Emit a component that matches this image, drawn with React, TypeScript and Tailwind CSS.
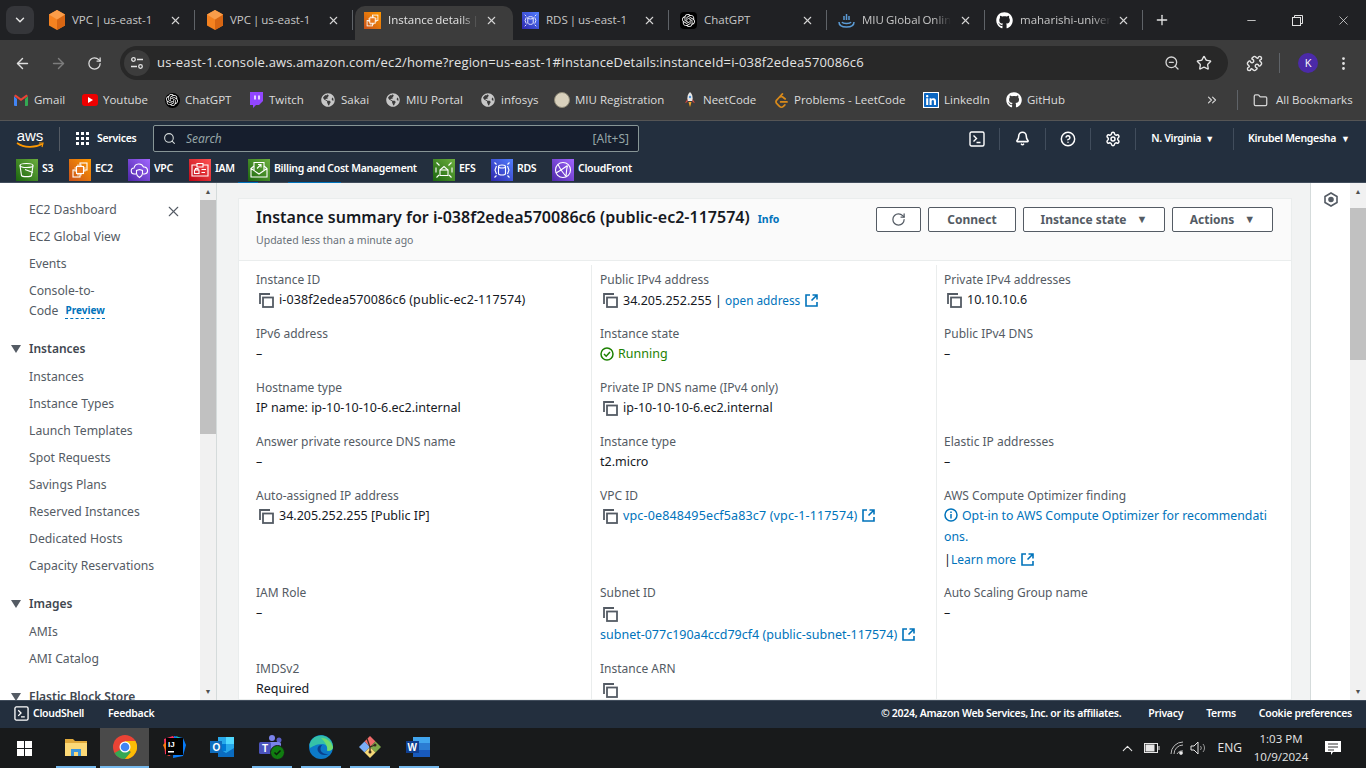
import { ArrowLeft, ArrowRight, RotateCw, Search, ZoomOut, Star, Puzzle, EllipsisVertical, ChevronDown, X, Plus, Minus, Folder, ChevronsRight, Bell, CircleHelp, Settings, ChevronUp } from 'lucide-react';
import { FaGithub, FaLinkedin, FaGlobeAmericas } from 'react-icons/fa';
import { SiOpenai, SiLeetcode } from 'react-icons/si';

const chromeFont = "font-['Open_Sans','Noto_Sans',sans-serif]";

function OrangeCube() {
  return (
    <svg width="16" height="20" viewBox="0 0 16 20">
      <path d="M8 0l8 4.500v11L8 20 0 15.500v-11z" fill="#f58220" />
      <path d="M8 9.500V20l8-4.500v-11z" fill="#d86613" />
      <path d="M8 0l8 4.500-8 5-8-5z" fill="#fa9d4a" />
    </svg>
  );
}

// service glyphs, drawn on a 22 box
const stroke = { fill: 'none', stroke: '#fff', strokeWidth: 1.1 };

function Ec2Glyph({ size = 22 }: { size?: number }) {
  return (
    <svg width={size} height={size} viewBox="0 0 22 22" {...stroke}>
      <rect x="11" y="4" width="7" height="7" />
      <rect x="4" y="11" width="7" height="7" />
      <rect x="7.500" y="7.500" width="7" height="7" fill="#e8761a" />
      <path d="M9 5.500v2M12 5.500v2M9 14.500v2M12 14.500v2M5.500 9h2M5.500 12h2M14.500 9h2M14.500 12h2" />
    </svg>
  );
}

function RdsGlyph({ size = 22 }: { size?: number }) {
  return (
    <svg width={size} height={size} viewBox="0 0 22 22" {...stroke}>
      <ellipse cx="11" cy="7.500" rx="3.500" ry="1.500" />
      <path d="M7.500 7.500v7c0 2 7 2 7 0v-7" />
      <path d="M5.500 7l-1.500 4 1.500 4M16.500 7l1.500 4-1.500 4" />
      <path d="M3.500 3.500l2 2M18.500 3.500l-2 2M3.500 18.500l2-2M18.500 18.500l-2-2" />
    </svg>
  );
}

function Svc({ bg, children, small }: { bg: string; children: React.ReactNode; small?: boolean }) {
  return <div className={`${small ? 'w-[17px] h-[17px]' : 'w-[22px] h-[22px]'} flex items-center justify-center shrink-0 ${bg}`}>{children}</div>;
}

const tabs = [
  { title: 'VPC | us-east-1', icon: <OrangeCube /> },
  { title: 'VPC | us-east-1', icon: <OrangeCube /> },
  { title: 'Instance details |', active: true, fade: true, icon: <Svc small bg="bg-[linear-gradient(45deg,#c8511b,#ff9900)]"><Ec2Glyph size={17} /></Svc> },
  { title: 'RDS | us-east-1', icon: <Svc small bg="bg-[linear-gradient(45deg,#2e27ad,#527fff)]"><RdsGlyph size={17} /></Svc> },
  { title: 'ChatGPT', icon: <div className="w-[17px] h-[17px] bg-black rounded-sm flex items-center justify-center text-white"><SiOpenai size={13} /></div> },
  { title: 'MIU Global Onlin', fade: true, icon: <svg width="17" height="17" viewBox="0 0 17 17" fill="none" stroke="#5b9bd5" strokeWidth="1.500"><path d="M1 10c0 4 3 5 7.500 5S16 14 16 10" /><path d="M4 10c1 2 8 2 9 0M8.500 2v6M6 4v4M11 4v4" /></svg> },
  { title: 'maharishi-univer', fade: true, last: true, icon: <FaGithub size={17} className="text-white" /> },
];

function ChromeTab({ title, icon, active, fade }: { title: string; icon: React.ReactNode; active?: boolean; fade?: boolean; last?: boolean }) {
  return (
    <div className={`w-[158px] h-[34px] flex items-center shrink-0 pl-[9px] pb-[6px] ${active ? 'bg-[#3c3c3c] rounded-t-[10px]' : ''}`}>
      <div className="w-[17px] flex justify-center mr-[7px]">{icon}</div>
      <div className="w-[90px] text-[11.500px] [word-spacing:-1px] whitespace-nowrap">
        <span className={`inline-block ${fade ? '[mask-image:linear-gradient(to_right,black_80%,transparent)]' : ''} ${active ? 'text-[#e3e3e3]' : 'text-[#c7c7c7]'}`}>{title}</span>
      </div>
      <X size={13} strokeWidth={2} className="ml-[7px] text-[#d5d5d5]" />
      <div className={`ml-auto mr-[2px] w-px h-[20px] ${active ? '' : 'bg-[#5f6368]'}`} />
    </div>
  );
}

function ChromeTabBar() {
  return (
    <div className={`h-[40px] bg-[#202124] flex items-end ${chromeFont}`}>
      <div className="w-[28px] h-[28px] ml-[6px] mb-[6px] mr-[5px] rounded-lg bg-[#35363a] flex items-center justify-center text-[#e3e3e3]">
        <ChevronDown size={14} strokeWidth={2.500} />
      </div>
      {tabs.map((t, i) => (
        <ChromeTab key={i} {...t} />
      ))}
      <Plus size={16} strokeWidth={2} className="text-[#e3e3e3] mb-[12px] ml-[9px]" />
      <div className="ml-auto flex items-center h-[40px] text-[#e3e3e3]">
        <div className="w-[46px] flex justify-center"><Minus size={13} strokeWidth={1.500} /></div>
        <div className="w-[46px] flex justify-center">
          <svg width="11" height="11" viewBox="0 0 11 11" fill="none" stroke="currentColor"><rect x="0.500" y="2.500" width="8" height="8" /><path d="M2.500 2.500v-2h8v8h-2" /></svg>
        </div>
        <div className="w-[46px] flex justify-center"><X size={15} strokeWidth={1.200} /></div>
      </div>
    </div>
  );
}

function AddressBar() {
  return (
    <div className={`h-[46px] bg-[#3c3c3c] flex items-center ${chromeFont}`}>
      <div className="w-[120px] flex items-center text-[#dedede]">
        <ArrowLeft size={17} className="ml-[14px]" />
        <ArrowRight size={17} className="ml-[19px] text-[#7d7d7d]" />
        <RotateCw size={15} className="ml-[20px]" />
      </div>
      <div className="w-[1108px] h-[34px] rounded-full bg-[#282828] flex items-center">
        <div className="w-[26px] h-[26px] rounded-full bg-[#3c3c3c] ml-[4px] flex items-center justify-center">
          <svg width="14" height="14" viewBox="0 0 14 14" fill="none" stroke="#e3e3e3" strokeWidth="1.300"><circle cx="3.500" cy="3.500" r="1.800" /><path d="M7 3.500h6M1 10.500h6" /><circle cx="10.500" cy="10.500" r="1.800" /></svg>
        </div>
        <span className="ml-[7px] text-[13px] tracking-[0.16px] text-[#e3e3e3] whitespace-nowrap">us-east-1.console.aws.amazon.com/ec2/home?region=us-east-1#InstanceDetails:instanceId=i-038f2edea570086c6</span>
        <ZoomOut size={16} className="ml-auto text-[#d5d5d5]" />
        <Star size={16} className="ml-[16px] mr-[16px] text-[#e3e3e3]" />
      </div>
      <Puzzle size={17} className="ml-[18px] text-[#e3e3e3]" />
      <div className="w-px h-[20px] bg-[#5f6368] ml-[16px]" />
      <div className="w-[20px] h-[20px] rounded-full bg-[#4b2aa8] text-white text-[11px] flex items-center justify-center ml-[18px]">K</div>
      <EllipsisVertical size={17} className="ml-[17px] text-[#e3e3e3]" />
    </div>
  );
}

const GlobeIcon = <FaGlobeAmericas size={14} className="text-[#c7c7c7]" />;

const bookmarks = [
  { name: 'Gmail', w: 'w-[69px]', icon: <svg width="14" height="12" viewBox="0 0 14 12"><path d="M0 2v9a1 1 0 001 1h2V5z" fill="#4285f4" /><path d="M14 2v9a1 1 0 01-1 1h-2V5z" fill="#34a853" /><path d="M0 2l7 5 7-5-1.500-1.500L7 4.500 1.500.5z" fill="#ea4335" /></svg> },
  { name: 'Youtube', w: 'w-[82px]', icon: <div className="w-[16px] h-[12px] bg-[#e00] rounded-[3px] flex items-center justify-center"><div className="w-0 h-0 border-y-[3px] border-y-transparent border-l-[5px] border-l-white" /></div> },
  { name: 'ChatGPT', w: 'w-[84px]', icon: <div className="w-[15px] h-[15px] rounded-full bg-black flex items-center justify-center text-white"><SiOpenai size={12} /></div> },
  { name: 'Twitch', w: 'w-[72px]', icon: <svg width="14" height="16" viewBox="0 0 14 16"><path d="M1 0h13v9l-4 4H7l-3 3v-3H1z" fill="#9146ff" /><path d="M6 3.500v4M10 3.500v4" stroke="#fff" strokeWidth="1.500" /></svg> },
  { name: 'Sakai', w: 'w-[65px]', icon: GlobeIcon },
  { name: 'MIU Portal', w: 'w-[95px]', icon: GlobeIcon },
  { name: 'infosys', w: 'w-[74px]', icon: GlobeIcon },
  { name: 'MIU Registration', w: 'w-[128px]', icon: <div className="w-[16px] h-[16px] rounded-full bg-[#d8d0bc] border border-[#8f8a78]" /> },
  { name: 'NeetCode', w: 'w-[91px]', icon: <svg width="10" height="16" viewBox="0 0 10 16"><path d="M5 0c2.500 2 3 5 2.500 9h-5C2 5 2.500 2 5 0z" fill="#e8e8e8" /><path d="M2.500 7L0 11l2.500-1zM7.500 7L10 11l-2.500-1z" fill="#d9473c" /><circle cx="5" cy="5" r="1.200" fill="#4a90d9" /><path d="M3.500 10h3L5 15z" fill="#f5a623" /></svg> },
  { name: 'Problems - LeetCode', w: 'w-[150px]', icon: <SiLeetcode size={15} className="text-[#d98a1a]" /> },
  { name: 'LinkedIn', w: 'w-[83px]', icon: <FaLinkedin size={16} className="text-[#0a66c2] bg-white" /> },
  { name: 'GitHub', w: 'w-[70px]', icon: <FaGithub size={16} className="text-white" /> },
];

function BookmarksBar() {
  return (
    <div className={`h-[35px] bg-[#3c3c3c] border-b border-[#555] flex items-center pl-[13px] pb-[6px] ${chromeFont}`}>
      {bookmarks.map((b) => (
        <div key={b.name} className={`${b.w} flex items-center shrink-0`}>
          <div className="w-[16px] flex justify-center mr-[5px]">{b.icon}</div>
          <span className="text-[11.500px] text-[#dcdcdc] whitespace-nowrap">{b.name}</span>
        </div>
      ))}
      <ChevronsRight size={14} className="ml-[129px] text-[#d5d5d5]" />
      <div className="w-px h-[20px] bg-[#5f6368] ml-[18px]" />
      <Folder size={15} className="ml-[15px] text-[#d5d5d5]" />
      <span className="ml-[8px] text-[11.500px] text-[#dcdcdc] whitespace-nowrap">All Bookmarks</span>
    </div>
  );
}

const shortcuts = [
  { name: 'S3', bg: 'bg-[linear-gradient(45deg,#1b660f,#6cae3e)]', w: 'w-[53px]', icon: <svg width="22" height="22" viewBox="0 0 22 22" {...stroke}><ellipse cx="10.500" cy="6.500" rx="6.500" ry="2" /><path d="M4 6.500l1.500 10c.5 1.500 9.500 1.500 10 0l1.500-10" /><path d="M9 10.500l8 3" /></svg> },
  { name: 'EC2', bg: 'bg-[linear-gradient(45deg,#c8511b,#ff9900)]', w: 'w-[59px]', icon: <Ec2Glyph /> },
  { name: 'VPC', bg: 'bg-[linear-gradient(45deg,#4d27a8,#a166ff)]', w: 'w-[61px]', icon: <svg width="22" height="22" viewBox="0 0 22 22" {...stroke}><path d="M8 15H6.500a3 3 0 01-.5-6 5 5 0 019.500-1 3.500 3.500 0 011 7H15" /><path d="M11.500 10.500l3 1v3c0 2-1.500 3-3 4-1.500-1-3-2-3-4v-3z" /></svg> },
  { name: 'IAM', bg: 'bg-[linear-gradient(45deg,#bd0816,#ff5252)]', w: 'w-[59px]', icon: <svg width="22" height="22" viewBox="0 0 22 22" {...stroke}><path d="M8 6H3v11h16V6h-5" /><path d="M8 4.500h6V8H8z" /><rect x="5.500" y="11" width="4.500" height="3.500" /><path d="M6.500 11V9.500h2.500V11M12.500 10.500H17M12.500 13.500H16" /></svg> },
  { name: 'Billing and Cost Management', bg: 'bg-[linear-gradient(45deg,#1b660f,#6cae3e)]', w: 'w-[185px]', icon: <svg width="22" height="22" viewBox="0 0 22 22" {...stroke}><path d="M3 9.500V18h16V9.500l-3-2.500M6 7L3 9.500l8 5.500 8-5.500" /><path d="M6 11V3.500h10V11M9 9.500l4-4M10 5.500h3v3" /></svg> },
  { name: 'EFS', bg: 'bg-[linear-gradient(45deg,#1b660f,#6cae3e)]', w: 'w-[58px]', icon: <svg width="22" height="22" viewBox="0 0 22 22" {...stroke}><path d="M7 11l4-3.500 4 3.500v5.500H7z" /><path d="M7 11h8" /><path d="M3.500 3.500l3 3M18.500 3.500l-3 3M3.500 18.500l2.500-2.500M18.500 18.500L16 16M3 8.500v5M19 8.500v5" /></svg> },
  { name: 'RDS', bg: 'bg-[linear-gradient(45deg,#2e27ad,#527fff)]', w: 'w-[61px]', icon: <RdsGlyph /> },
  { name: 'CloudFront', bg: 'bg-[linear-gradient(45deg,#4d27a8,#a166ff)]', w: 'w-[90px]', icon: <svg width="22" height="22" viewBox="0 0 22 22" {...stroke}><circle cx="11" cy="11" r="7.500" /><path d="M6 5.500L9 11l-5 3M9 11l6.500-4.500M9 11l5 6.500M15.500 6.500c-1 3-1 6-1.500 11" /></svg> },
];

const navFont = "text-[10.500px] tracking-[-0.3px] font-semibold whitespace-nowrap";

function TerminalBox({ size }: { size: number }) {
  return (
    <svg width={size} height={size} viewBox="0 0 16 16" fill="none" stroke="#fff" strokeWidth="1.400">
      <rect x="1" y="1" width="14" height="14" rx="1.500" />
      <path d="M4.500 4.500l3 3-3 3M7.500 11.500h4" />
    </svg>
  );
}

function AwsHeader() {
  return (
    <div className="h-[62px] bg-[#232f3e] font-['Noto_Sans',sans-serif] text-white">
      <div className="h-[35px] flex items-center">
        <div className="ml-[16px] w-[28px] flex flex-col items-center">
          <span className="text-[15px] leading-[13px] font-['Liberation_Sans',sans-serif]">aws</span>
          <svg width="28" height="7" viewBox="0 0 28 7" fill="none"><path d="M1 1c7 5 18 5 25 1" stroke="#ff9900" strokeWidth="1.600" /><path d="M23 1l4 0-1 4" stroke="#ff9900" strokeWidth="1.200" /></svg>
        </div>
        <div className="ml-[15px] w-px h-[24px] bg-[#545b64]" />
        <div className="ml-[16px] grid grid-cols-3 gap-[2px]">
          {Array.from({ length: 9 }).map((_, i) => (
            <div key={i} className="w-[3px] h-[3px] bg-white" />
          ))}
        </div>
        <span className={`ml-[8px] w-[47px] ${navFont}`}>Services</span>
        <div className="ml-[9px] w-[486px] h-[27px] border border-[#879596] rounded-[2px] bg-[#161e2d] flex items-center px-[9px]">
          <Search size={13} className="text-[#d5dbdb]" />
          <span className="ml-[10px] text-[12px] italic text-[#95a5a6]">Search</span>
          <span className="ml-auto text-[12px] text-[#95a5a6]">[Alt+S]</span>
        </div>
        <div className="ml-auto flex items-center h-[24px]">
          <div className="mx-[14px]"><TerminalBox size={16} /></div>
          <div className="w-px h-[22px] bg-[#414d5c]" />
          <Bell size={15} strokeWidth={2.500} className="mx-[15px]" />
          <div className="w-px h-[22px] bg-[#414d5c]" />
          <CircleHelp size={16} strokeWidth={2.200} className="mx-[14px]" />
          <div className="w-px h-[22px] bg-[#414d5c]" />
          <Settings size={16} strokeWidth={2.200} className="mx-[14px]" />
          <div className="w-px h-[22px] bg-[#414d5c]" />
          <span className={`ml-[15px] ${navFont}`}>N. Virginia</span>
          <span className="ml-[4px] mr-[19px] text-[9px]">▼</span>
          <div className="w-px h-[22px] bg-[#414d5c]" />
          <span className={`ml-[14px] ${navFont}`}>Kirubel Mengesha</span>
          <span className="ml-[5px] mr-[16px] text-[9px]">▼</span>
        </div>
      </div>
      <div className="h-[26px] flex items-start pl-[16px] pt-[3px]">
        {shortcuts.map((s) => (
          <div key={s.name} className={`${s.w} flex items-start shrink-0`}>
            <Svc bg={s.bg}>{s.icon}</Svc>
            <span className={`ml-[4px] leading-[18px] ${navFont}`}>{s.name}</span>
          </div>
        ))}
      </div>
      <div className="h-px bg-[#414d5c] flex">
        <div className="ml-[238px] w-[20px] bg-[#0073bb]" />
        <div className="ml-[30px] w-[53px] bg-[#0073bb]" />
      </div>
    </div>
  );
}

const navTop = ['EC2 Global View', 'Events'];
const navGroups: { title: string; items: string[] }[] = [
  { title: 'Instances', items: ['Instances', 'Instance Types', 'Launch Templates', 'Spot Requests', 'Savings Plans', 'Reserved Instances', 'Dedicated Hosts', 'Capacity Reservations'] },
  { title: 'Images', items: ['AMIs', 'AMI Catalog'] },
  { title: 'Elastic Block Store', items: [] },
];

function Sidebar() {
  return (
    <div className="w-[200px] shrink-0 bg-white text-[12.200px] text-[#545b64] leading-[27px] pt-[13px]">
      <div className="pl-[29px] pr-[18px] flex items-center justify-between">
        <span>EC2 Dashboard</span>
        <X size={17} strokeWidth={1.500} className="text-[#545b64] mt-[3px]" />
      </div>
      {navTop.map((n) => (
        <div key={n} className="pl-[29px]">{n}</div>
      ))}
      <div className="pl-[29px] leading-[20px] pt-[4px]">Console-to-</div>
      <div className="pl-[29px] leading-[20px] flex items-center">
        Code
        <span className="ml-[7px] text-[10px] font-bold text-[#0073bb] border-b border-dashed border-[#0073bb] leading-[15px]">Preview</span>
      </div>
      <div className="pt-[3px]">
        {navGroups.map((g) => (
          <div key={g.title} className="mt-[10px]">
            <div className="flex items-center font-semibold text-[12px] text-[#414750] pl-[11px] h-[29px]">
              <svg width="10" height="8" viewBox="0 0 10 8" className="mr-[8px]"><path d="M0 0h10L5 8z" fill="#545b64" /></svg>
              {g.title}
            </div>
            {g.items.map((i) => (
              <div key={i} className="pl-[29px] font-normal text-[#545b64]">{i}</div>
            ))}
          </div>
        ))}
      </div>
    </div>
  );
}

function ScrollBar({ thumbClass }: { thumbClass: string }) {
  return (
    <div className="w-[16px] shrink-0 bg-[#f1f1f1] flex flex-col items-center h-full">
      <span className="text-[7px] leading-[17px] h-[17px] text-[#505050]">▲</span>
      <div className={`w-full bg-[#c1c1c1] ${thumbClass}`} />
      <span className="mt-auto text-[7px] leading-[17px] h-[17px] text-[#505050]">▼</span>
    </div>
  );
}

function CopyGlyph() {
  return (
    <svg width="15" height="15" viewBox="0 0 15 15" fill="none" stroke="#545b64" className="shrink-0">
      <path d="M1 11V1h10" strokeWidth="1.800" />
      <rect x="4" y="4.500" width="10" height="9.500" strokeWidth="1.800" />
    </svg>
  );
}

function ExternalLink() {
  return (
    <svg width="13" height="13" viewBox="0 0 13 13" fill="none" stroke="#0073bb" strokeWidth="1.600" className="inline-block ml-[5px] shrink-0 align-[-2px]">
      <path d="M5 1H1v11h11V8" />
      <path d="M7.500 1H12v4.500M12 1L6.500 6.500" />
    </svg>
  );
}

function Field({ label, h = 'h-[54px]', children }: { label: string; h?: string; children?: React.ReactNode }) {
  return (
    <div className={h}>
      <div className="text-[12px] leading-[20px] text-[#545b64] whitespace-nowrap">{label}</div>
      <div className="text-[12.500px] leading-[20px] text-[#16191f]">{children}</div>
    </div>
  );
}

function Copyable({ children }: { children: React.ReactNode }) {
  return (
    <div className="flex items-center pl-[3px] whitespace-nowrap">
      <CopyGlyph />
      <span className="ml-[5px]">{children}</span>
    </div>
  );
}

const A = ({ children, className = '' }: { children: React.ReactNode; className?: string }) => <span className={`text-[#0073bb] ${className}`}>{children}</span>;

function InstanceSummary() {
  return (
    <div className="bg-white border border-[#eaeded] w-[1054px] ml-[21px] mt-[15px] shrink-0">
      <div className="h-[62px] bg-[#fafafa] border-b border-[#eaeded] flex pl-[17px] pr-[18px]">
        <div className="pt-[7px]">
          <div className="flex items-baseline whitespace-nowrap">
            <span className="text-[16px] font-semibold text-[#16191f] leading-[22px] tracking-[0.02px]">Instance summary for i-038f2edea570086c6 (public-ec2-117574)</span>
            <span className="ml-[8px] text-[10.500px] font-bold text-[#0073bb]">Info</span>
          </div>
          <div className="text-[10.500px] text-[#687078] mt-[5px]">Updated less than a minute ago</div>
        </div>
        <div className="ml-auto flex items-start gap-[7px] pt-[8px] text-[12px] font-bold text-[#545b64]">
          <button className="w-[45px] h-[25px] border border-[#545b64] rounded-[2px] bg-white flex items-center justify-center"><RotateCw size={15} strokeWidth={2} /></button>
          <button className="w-[88px] h-[25px] border border-[#545b64] rounded-[2px] bg-white">Connect</button>
          <button className="w-[142px] h-[25px] border border-[#545b64] rounded-[2px] bg-white flex items-center justify-center gap-[10px]">Instance state <span className="text-[11px]">▼</span></button>
          <button className="w-[101px] h-[25px] border border-[#545b64] rounded-[2px] bg-white flex items-center justify-center gap-[10px]">Actions <span className="text-[11px]">▼</span></button>
        </div>
      </div>
      <div className="flex h-[500px]">
        <div className="w-[353px] pl-[17px] pt-[5px] mt-[4px] border-r border-[#eaeded]">
          <Field label="Instance ID"><Copyable><span className="tracking-[0.1px]">i-038f2edea570086c6 (public-ec2-117574)</span></Copyable></Field>
          <Field label="IPv6 address">–</Field>
          <Field label="Hostname type">IP name: ip-10-10-10-6.ec2.internal</Field>
          <Field label="Answer private resource DNS name">–</Field>
          <Field label="Auto-assigned IP address" h="h-[97px]"><Copyable>34.205.252.255 [Public IP]</Copyable></Field>
          <Field label="IAM Role" h="h-[76px]">–</Field>
          <Field label="IMDSv2">Required</Field>
        </div>
        <div className="w-[345px] pl-[8px] pt-[5px] mt-[4px] border-r border-[#eaeded]">
          <Field label="Public IPv4 address"><Copyable>34.205.252.255 | <A className="text-[11.800px]">open address</A><ExternalLink /></Copyable></Field>
          <Field label="Instance state">
            <div className="flex items-center text-[#1d8102]">
              <svg width="14" height="14" viewBox="0 0 14 14" fill="none" stroke="#1d8102" strokeWidth="1.500" className="mr-[4px]"><circle cx="7" cy="7" r="6" /><path d="M4 7l2.200 2.200L10 5" /></svg>
              Running
            </div>
          </Field>
          <Field label="Private IP DNS name (IPv4 only)"><Copyable>ip-10-10-10-6.ec2.internal</Copyable></Field>
          <Field label="Instance type">t2.micro</Field>
          <Field label="VPC ID" h="h-[97px]"><Copyable><A className="tracking-[0.15px]">vpc-0e848495ecf5a83c7 (vpc-1-117574)</A><ExternalLink /></Copyable></Field>
          <Field label="Subnet ID" h="h-[76px]">
            <div className="pl-[3px] h-[22px] flex items-center pt-[1px]"><CopyGlyph /></div>
            <div className="whitespace-nowrap"><A>subnet-077c190a4ccd79cf4 (public-subnet-117574)</A><ExternalLink /></div>
          </Field>
          <Field label="Instance ARN">
            <div className="pl-[3px] h-[22px] flex items-center pt-[1px]"><CopyGlyph /></div>
          </Field>
        </div>
        <div className="flex-1 pl-[7px] pt-[5px] mt-[4px] pr-[20px]">
          <Field label="Private IPv4 addresses"><Copyable>10.10.10.6</Copyable></Field>
          <Field label="Public IPv4 DNS">–</Field>
          <div className="h-[54px]" />
          <Field label="Elastic IP addresses">–</Field>
          <Field label="AWS Compute Optimizer finding" h="h-[97px]">
            <div className="text-[#0073bb] break-all leading-[21px] text-[12.300px] -mt-[1px]">
              <svg width="14" height="14" viewBox="0 0 14 14" fill="none" stroke="#0073bb" strokeWidth="1.500" className="inline-block mr-[4px] align-[-2px]"><circle cx="7" cy="7" r="6" /><path d="M7 6v4.500M7 3.500v1.500" /></svg>
              Opt-in to AWS Compute Optimizer for recommendations.
            </div>
            <div className="mt-[2px] whitespace-nowrap leading-[21px]">|<A className="text-[12px]">Learn more</A><ExternalLink /></div>
          </Field>
          <Field label="Auto Scaling Group name" h="h-[76px]">–</Field>
        </div>
      </div>
    </div>
  );
}

function Footer() {
  return (
    <div className={`h-[28px] pb-[2px] bg-[#232f3e] border-t border-[#414d5c] flex items-center text-white font-['Noto_Sans',sans-serif] ${navFont}`}>
      <div className="ml-[14px]"><TerminalBox size={15} /></div>
      <span className="ml-[4px]">CloudShell</span>
      <span className="ml-[24px]">Feedback</span>
      <span className="ml-auto">© 2024, Amazon Web Services, Inc. or its affiliates.</span>
      <span className="ml-[27px]">Privacy</span>
      <span className="ml-[23px]">Terms</span>
      <span className="ml-[23px] mr-[14px]">Cookie preferences</span>
    </div>
  );
}

const letter = { fill: '#fff', fontSize: 10, fontWeight: 700, fontFamily: 'Liberation Sans, sans-serif' };

const taskIcons: { key: string; open?: boolean; active?: boolean; icon: React.ReactNode }[] = [
  { key: 'files', open: true, icon: <svg width="22" height="20" viewBox="0 0 22 20"><path d="M0 2h8l2 2h12v15H0z" fill="#e0a93a" /><rect x="0" y="6" width="22" height="13" fill="#fcd977" /><rect x="6" y="12" width="10" height="7" fill="#3a96dd" /><rect x="9" y="15" width="4" height="4" fill="#fcd977" /></svg> },
  { key: 'chrome', open: true, active: true, icon: <svg width="24" height="24" viewBox="0 0 24 24"><circle cx="12" cy="12" r="12" fill="#ea4335" /><path d="M12 12L1.600 18A12 12 0 0012 24l6-7z" fill="#34a853" /><path d="M12 12l6 5-6 7a12 12 0 0010.400-18H12z" fill="#fbbc05" /><circle cx="12" cy="12" r="5.500" fill="#fff" /><circle cx="12" cy="12" r="4.300" fill="#4285f4" /></svg> },
  { key: 'idea', icon: <svg width="24" height="24" viewBox="0 0 24 24"><path d="M2 4l9-3 3 4-6 16-5-2z" fill="#fe315d" /><path d="M1 10l4-4 4 12-3 3z" fill="#f97a12" /><path d="M12 1l9 2 3 7-3 11-10 2z" fill="#087cfa" /><path d="M14 1l6 3v6z" fill="#21d789" /><rect x="4" y="3" width="17" height="17" fill="#000" /><text x="6" y="12" {...letter} fontSize={8}>IJ</text><rect x="6" y="16" width="6" height="1.500" fill="#fff" /></svg> },
  { key: 'outlook', icon: <svg width="25" height="22" viewBox="0 0 25 22"><rect x="8" y="1" width="16" height="19" fill="#28a8ea" /><rect x="16" y="1" width="8" height="7" fill="#50d9ff" /><rect x="8" y="8" width="8" height="7" fill="#0078d4" /><path d="M8 12l8 5 8-5v9H8z" fill="#0a6cc0" /><rect x="0" y="5" width="12" height="12" fill="#0f6cbd" /><text x="2.500" y="15" {...letter}>O</text></svg> },
  { key: 'teams', open: true, icon: <svg width="26" height="25" viewBox="0 0 26 25"><circle cx="13" cy="3" r="3" fill="#7b83eb" /><circle cx="20" cy="5" r="2.500" fill="#5b5fc7" /><rect x="8" y="7" width="14" height="12" rx="2" fill="#7b83eb" /><rect x="0" y="7" width="12" height="12" rx="1.500" fill="#4b53bc" /><text x="3" y="16.500" {...letter}>T</text><circle cx="18.500" cy="17.500" r="7" fill="#107c10" stroke="#1a1a1a" /><path d="M15.500 17.500l2 2 4-4" fill="none" stroke="#0b1f0b" strokeWidth="1.500" /></svg> },
  { key: 'edge', open: true, icon: <svg width="24" height="24" viewBox="0 0 24 24"><circle cx="12" cy="12" r="12" fill="#0c7ac9" /><path d="M0.500 9A12 12 0 0124 12c0 3-3 4.500-6 3.500 1.500-3-.5-6.500-5.500-6.500C7 9 3 12 1 13z" fill="#35c1a8" /><path d="M12 3a12 12 0 0112 9c0 3-3 4.500-6 3.500 1-3-1-8-6-12.500z" fill="#6fdc6f" /><path d="M13 10c-3-.5-6 3-3.500 7 2 3 6 4 10 2-3 .5-8-1-8-5 0-2 1-3 1.500-4z" fill="#0a3f8c" /></svg> },
  { key: 'git', open: true, icon: <svg width="24" height="24" viewBox="0 0 24 24"><path d="M12 1l5.500 5.500L12 12 6.500 6.500z" fill="#ef6a6a" /><path d="M1 12l5.500-5.500L12 12l-5.500 5.500z" fill="#7aaef8" /><path d="M12 12l5.500-5.500L23 12l-5.500 5.500z" fill="#7fa84a" /><path d="M6.500 17.500L12 12l5.500 5.500L12 23z" fill="#f6d978" /><path d="M9 3.500L12 12v5M12 12l5-2" stroke="#3a2a20" strokeWidth="1.300" fill="none" /><circle cx="12" cy="17" r="1.500" fill="#3a2a20" /><circle cx="17" cy="10" r="1.500" fill="#3a2a20" /></svg> },
  { key: 'word', open: true, icon: <svg width="25" height="22" viewBox="0 0 25 22"><rect x="7" y="1" width="17" height="20" rx="1" fill="#2b7cd3" /><rect x="7" y="1" width="17" height="6" fill="#41a5ee" /><rect x="7" y="14" width="17" height="7" fill="#185abd" /><rect x="0" y="5" width="13" height="12" fill="#103f91" /><text x="1.500" y="15" {...letter}>W</text></svg> },
];

function Taskbar() {
  return (
    <div className="h-[40px] bg-[#181a1b] flex items-stretch text-white font-['Open_Sans',sans-serif]">
      <div className="w-[48px] flex items-center justify-center">
        <div className="grid grid-cols-2 gap-[1px]">
          {[0, 1, 2, 3].map((i) => <div key={i} className="w-[7px] h-[7px] bg-white" />)}
        </div>
      </div>
      <div className="w-[3px]" />
      {taskIcons.map((t) => (
        <div key={t.key} className={`w-[49px] flex flex-col items-center justify-end ${t.active ? 'bg-[#4a4a4a]' : ''}`}>
          <div className="flex-1 flex items-center justify-center">{t.icon}</div>
          <div className={`h-[2px] ${t.active ? 'w-full' : 'w-[40px]'} ${t.open ? 'bg-[#76b9ed]' : ''}`} />
        </div>
      ))}
      <div className="ml-auto flex items-center text-[#e6e6e6]">
        <ChevronUp size={17} strokeWidth={1.500} />
        <svg width="16" height="10" viewBox="0 0 16 10" className="ml-[8px]" fill="none" stroke="currentColor"><rect x="0.500" y="0.500" width="13" height="9" /><rect x="2" y="2" width="8" height="6" fill="currentColor" /><path d="M15 3v4" /></svg>
        <svg width="14" height="14" viewBox="0 0 14 14" className="ml-[10px]" fill="none" stroke="#bbb"><path d="M1 13A12 12 0 0113 1M4 13a9 9 0 019-9M7 13a6 6 0 016-3" /><circle cx="11" cy="12" r="1.500" fill="#fff" /></svg>
        <svg width="17" height="14" viewBox="0 0 17 14" className="ml-[6px]" fill="none" stroke="currentColor"><path d="M1 5h3l4-4v12l-4-4H1z" /><path d="M10.500 5a3 3 0 010 4M13 3a6 6 0 010 8" stroke="#999" /></svg>
        <span className="ml-[11px] text-[12px]">ENG</span>
        <div className="ml-[8px] w-[62px] text-center text-[11.500px] leading-[18px]">
          <div>1:03 PM</div>
          <div>10/9/2024</div>
        </div>
        <svg width="16" height="15" viewBox="0 0 16 15" className="ml-[13px] mr-[25px]"><path d="M0 0h16v11H8l-2 3v-3H0z" fill="#fff" /><path d="M3 3h10M3 6h10M3 9h6" stroke="#333" /></svg>
      </div>
    </div>
  );
}

export default function App() {
  return (
    <div className="w-[1366px] h-[768px] overflow-hidden flex flex-col bg-[#f2f3f3]">
      <ChromeTabBar />
      <AddressBar />
      <BookmarksBar />
      <AwsHeader />
      <div className="h-[517px] flex overflow-hidden font-['Noto_Sans',sans-serif]">
        <Sidebar />
        <ScrollBar thumbClass="h-[234px]" />
        <div className="flex-1 min-w-0 border-l border-[#d5dbdb] flex overflow-hidden">
          <InstanceSummary />
        </div>
        <div className="w-[40px] shrink-0 bg-white border-l border-[#d5dbdb] flex justify-center pt-[9px]">
          <svg width="14" height="15" viewBox="0 0 14 15" fill="none" stroke="#545b64" strokeWidth="1.600"><path d="M7 1l6 3.500v6L7 14l-6-3.500v-6z" /><circle cx="7" cy="7.500" r="2" fill="#545b64" /></svg>
        </div>
        <ScrollBar thumbClass="h-[152px] mt-[8px]" />
      </div>
      <Footer />
      <Taskbar />
    </div>
  );
}
